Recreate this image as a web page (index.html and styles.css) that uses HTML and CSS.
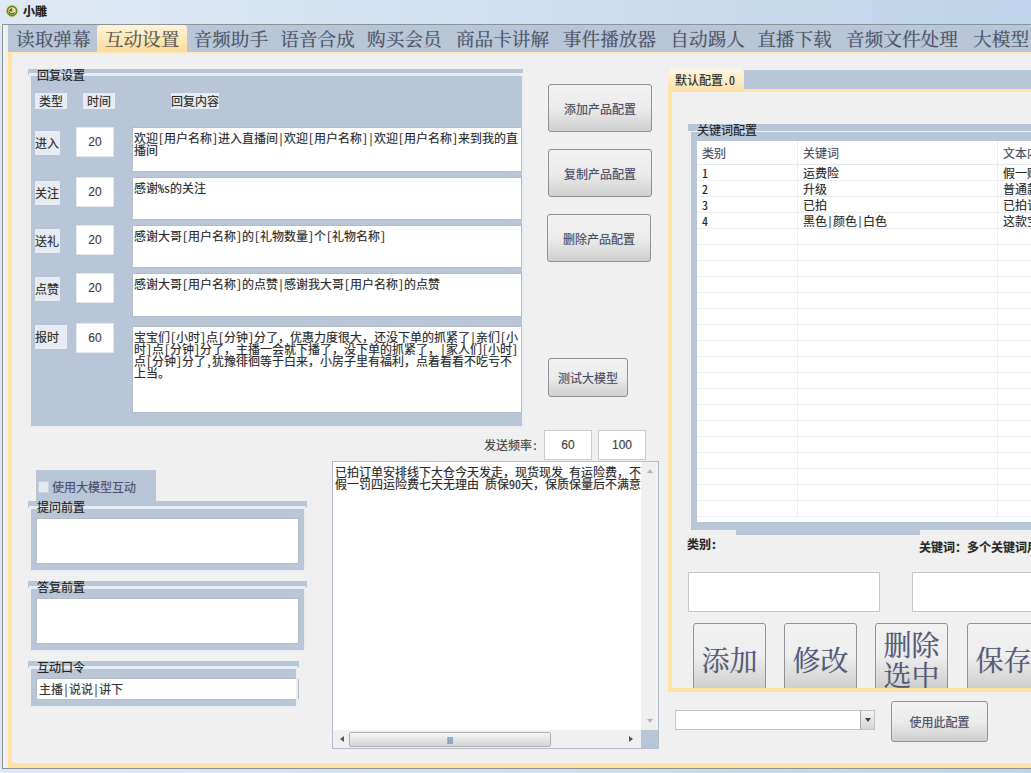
FILE: index.html
```html
<!DOCTYPE html>
<html lang="zh">
<head>
<meta charset="utf-8">
<title>小雕</title>
<link rel="stylesheet" href="styles.css">
</head>
<body>
<header class="titlebar">
  <svg class="app-icon" width="14" height="14" viewBox="0 0 14 14"><circle cx="7" cy="7" r="6.5" fill="#f3d6a4"/><circle cx="7" cy="7" r="4.6" fill="none" stroke="#4d8f2e" stroke-width="1.6"/><path d="M4 7.5a3 3 0 0 0 5.5 1M7 4.5l-2 2 2.4.6" fill="none" stroke="#2f6f1c" stroke-width="1.2"/></svg>
  <span class="app-name">小雕</span>
</header>
<main class="window">
  <nav class="tabs">
    <span class="tab">读取弹幕</span><span class="tab active">互动设置</span><span class="tab">音频助手</span><span class="tab">语音合成</span><span class="tab">购买会员</span><span class="tab">商品卡讲解</span><span class="tab">事件播放器</span><span class="tab">自动踢人</span><span class="tab">直播下载</span><span class="tab">音频文件处理</span><span class="tab">大模型</span>
  </nav>
  <section class="panel">
    <div class="left-stack">
      <div class="top-row">
        <div class="group reply-group">
          <div class="legend"><span>回复设置</span></div>
          <div class="group-body reply-body">
            <div class="reply-head">
              <span class="lbl">类型</span><span class="lbl head-time">时间</span><span class="lbl head-content">回复内容</span>
            </div>
            <div class="reply-row row-a"><span class="lbl tag">进入</span><div class="num">20</div><div class="field">欢迎[用户名称]进入直播间|欢迎[用户名称]|欢迎[用户名称]来到我的直播间</div></div>
            <div class="reply-row row-b"><span class="lbl tag">关注</span><div class="num">20</div><div class="field">感谢%s的关注</div></div>
            <div class="reply-row row-b"><span class="lbl tag">送礼</span><div class="num">20</div><div class="field">感谢大哥[用户名称]的[礼物数量]个[礼物名称]</div></div>
            <div class="reply-row row-c"><span class="lbl tag">点赞</span><div class="num">20</div><div class="field">感谢大哥[用户名称]的点赞|感谢我大哥[用户名称]的点赞</div></div>
            <div class="reply-row row-d"><span class="lbl tag wide">报时</span><div class="num">60</div><div class="field">宝宝们[小时]点[分钟]分了，优惠力度很大，还没下单的抓紧了|亲们[小时]点[分钟]分了，主播一会就下播了，没下单的抓紧了，|家人们[小时]点[分钟]分了,犹豫徘徊等于白来，小房子里有福利，点着看看不吃亏不上当。</div></div>
          </div>
        </div>
        <div class="action-col">
          <button class="btn action">添加产品配置</button>
          <button class="btn action">复制产品配置</button>
          <button class="btn action shift">删除产品配置</button>
          <button class="btn test">测试大模型</button>
        </div>
      </div>
      <div class="freq-row">
        <span class="freq-label">发送频率:</span><div class="num freq">60</div><div class="num freq">100</div>
      </div>
      <div class="bottom-row">
        <div class="llm-col">
          <div class="check-tab"><span class="check"></span><span>使用大模型互动</span></div>
          <div class="group small-group">
            <div class="legend"><span>提问前置</span></div>
            <div class="group-body"><div class="field tall"></div></div>
          </div>
          <div class="group small-group">
            <div class="legend"><span>答复前置</span></div>
            <div class="group-body"><div class="field tall"></div></div>
          </div>
          <div class="group cmd-group">
            <div class="legend"><span>互动口令</span></div>
            <div class="group-body"><div class="field cmd">主播|说说|讲下</div></div>
          </div>
        </div>
        <div class="memo">
          <div class="memo-main">
            <div class="memo-text">已拍订单安排线下大仓今天发走，现货现发 有运险费，不假一罚四运险费七天无理由 质保90天，保质保量后不满意</div>
            <div class="vscroll"><i class="arrow up"></i><i class="arrow down"></i></div>
          </div>
          <div class="hscroll">
            <i class="arrow left"></i>
            <div class="thumb">|||</div>
            <i class="arrow right"></i>
            <div class="corner"></div>
          </div>
        </div>
      </div>
    </div>
    <div class="right-stack">
      <div class="config-tabs"><span class="config-tab">默认配置.0</span></div>
      <div class="config-panel">
        <div class="group kw-group">
          <div class="legend"><span>关键词配置</span></div>
          <div class="group-body kw-body">
            <div class="grid">
              <div class="grid-head"><span>类别</span><span>关键词</span><span>文本内容</span></div>
              <div class="grid-row"><span>1</span><span>运费险</span><span>假一赔四运险费七天</span></div>
              <div class="grid-row"><span>2</span><span>升级</span><span>普通款升级</span></div>
              <div class="grid-row"><span>3</span><span>已拍</span><span>已拍订单安排</span></div>
              <div class="grid-row"><span>4</span><span>黑色|颜色|白色</span><span>这款宝贝</span></div>
              <div class="grid-row"><span></span><span></span><span></span></div>
              <div class="grid-row"><span></span><span></span><span></span></div>
              <div class="grid-row"><span></span><span></span><span></span></div>
              <div class="grid-row"><span></span><span></span><span></span></div>
              <div class="grid-row"><span></span><span></span><span></span></div>
              <div class="grid-row"><span></span><span></span><span></span></div>
              <div class="grid-row"><span></span><span></span><span></span></div>
              <div class="grid-row"><span></span><span></span><span></span></div>
              <div class="grid-row"><span></span><span></span><span></span></div>
              <div class="grid-row"><span></span><span></span><span></span></div>
              <div class="grid-row"><span></span><span></span><span></span></div>
              <div class="grid-row"><span></span><span></span><span></span></div>
              <div class="grid-row"><span></span><span></span><span></span></div>
              <div class="grid-row"><span></span><span></span><span></span></div>
              <div class="grid-row"><span></span><span></span><span></span></div>
              <div class="grid-row"><span></span><span></span><span></span></div>
              <div class="grid-row"><span></span><span></span><span></span></div>
              <div class="grid-row"><span></span><span></span><span></span></div>
            </div>
          </div>
          <div class="kw-foot"></div>
        </div>
        <div class="kw-labels"><span class="kw-cat">类别:</span><span class="kw-word">关键词：多个关键词用|隔开</span></div>
        <div class="kw-inputs"><div class="field kw-input"></div><div class="field kw-input second"></div></div>
        <div class="kw-buttons">
          <button class="btn big">添加</button><button class="btn big">修改</button><button class="btn big">删除选中</button><button class="btn big last">保存</button>
        </div>
      </div>
      <div class="use-row">
        <div class="combo"><span class="combo-drop"><i class="arrow down dark"></i></span></div>
        <button class="btn use">使用此配置</button>
      </div>
    </div>
  </section>
</main>
</body>
</html>
```
FILE: styles.css
```css
* { box-sizing: border-box; }
html, body { margin: 0; padding: 0; }
body {
  width: 1031px;
  height: 773px;
  overflow: hidden;
  background: linear-gradient(90deg, #dfe9f3 0%, #cfe0f0 50%, #bdd4ea 100%);
  font-family: "Noto Sans Mono CJK SC", "Noto Sans CJK SC", "Liberation Sans", sans-serif;
  font-size: 12px;
  line-height: 12px;
  color: #2a2a2a;
  text-shadow: 0 0 1px rgba(30, 30, 40, .3);
}
.titlebar {
  height: 24px;
  display: flex;
  align-items: center;
  padding: 0 0 2px 5px;
  gap: 4px;
}
.app-name { font-weight: 700; font-size: 12px; color: #222; }
.window {
  width: 1100px;
  height: 745px;
  margin-left: 2px;
  border: 1px solid #8d9299;
  background: #f0f0f0;
  display: flex;
  flex-direction: column;
}
.tabs {
  height: 27px;
  flex: none;
  display: flex;
  margin-left: 5px;
  padding-left: 2px;
  background: #b8c6d8;
}
.tab {
  font-family: "Noto Serif CJK SC", "Noto Sans CJK SC", serif;
  font-size: 18.67px;
  line-height: 27px;
  padding: 0 6.1px;
  color: #4d5468;
  white-space: nowrap;
}
.tab:first-child { padding-left: 6px; }
.tab.active {
  padding: 0 8px;
  border-radius: 3px 3px 0 0;
  background: linear-gradient(#fdf3da, #fddc9c);
  color: #5a5a50;
}
.tab:nth-child(5) { margin-right: 2px; }
.tab:nth-child(6) { margin-right: 1.5px; }
.tab:nth-child(7) { margin-right: 2px; }
.tab:nth-child(9) { margin-right: 2px; }
.tab:nth-child(10) { margin-right: 3px; }
.panel {
  flex: 1;
  display: flex;
  margin-left: 5px;
  border-left: 4px solid #ffe3a3;
  border-top: 2px solid #ffe9b9;
  border-bottom: 5px solid #ffe3a3;
  padding: 14px 0 0 16px;
  min-height: 0;
}
.left-stack { width: 632px; flex: none; }
.top-row { display: flex; height: 360px; }

.group { flex: none; }
.legend {
  height: 7px;
  background: #b8c6d8;
  padding-left: 9px;
  overflow: visible;
  white-space: nowrap;
}
.legend span { display: inline-block; position: relative; top: -1px; color: #222; line-height: 14px; }
.group-body {
  margin: 0 3px;
  background: #b8c6d8;
  border-top: 1px solid #e6edf5;
  outline: 2px solid #e9eef5;
}

.reply-group { width: 495px; height: 358px; padding-top: 1px; }
.reply-group .legend { height: 6px; }
.reply-body { height: 351px; padding: 17px 0 0 4px; width: 491px; margin-right: 0; }
.reply-head { display: flex; height: 16px; align-items: stretch; margin-bottom: 18px; }
.lbl { background: #e8ecf2; color: #2c2c2c; display: flex; align-items: center; white-space: nowrap; }
.head-time { margin-left: 16px; width: 32px; justify-content: center; }
.head-content { margin-left: 56px; }
.reply-head .lbl:first-child { width: 32px; justify-content: center; }
.reply-row { display: flex; align-items: flex-start; }
.tag { width: 25px; height: 24px; margin-top: 4px; flex: none; }
.tag.wide { width: 32px; margin-top: 2px; }
.num {
  width: 38px;
  height: 30px;
  margin-left: 16px;
  flex: none;
  background: #fff;
  border: 1px solid #e2e6ec;
  display: flex;
  align-items: center;
  justify-content: center;
  color: #444;
  font-family: "Liberation Sans", sans-serif;
}
.tag.wide + .num { margin-left: 9px; }
.field { background: #fff; border: 1px solid #b4bcc8; padding: 4px 0 0 1px; color: #2a2a2a; }
.reply-row .field { width: 390px; margin-left: 18px; word-break: break-all; flex: none; }
.row-a { height: 50px; } .row-a .field { height: 45px; }
.row-b { height: 48px; } .row-b .field { height: 43px; }
.row-c { height: 50px; } .row-c .field { height: 44px; }
.row-d .field { height: 87px; margin-top: 3px; }

.action-col { display: flex; flex-direction: column; align-items: flex-start; padding: 16px 0 0 25px; }
.btn {
  font-family: inherit;
  font-size: 12px;
  color: #4a4e66;
  border: 1px solid #8f9296;
  border-radius: 3px;
  background: linear-gradient(#f2f2f2 0%, #ececec 50%, #cfcfcf 100%);
  padding: 0;
  flex: none;
  text-shadow: inherit;
}
.action { width: 104px; height: 48px; margin-bottom: 17px; }
.action.shift { margin-left: -1px; margin-bottom: 96px; }
.test { width: 80px; height: 39px; }

.freq-row { display: flex; align-items: center; justify-content: flex-end; height: 30px; padding-right: 14px; gap: 6px; margin-top: 2px; }
.freq-label { color: #444; }
.num.freq { width: 48px; height: 30px; margin: 0; border-color: #c9cdd2; font-size: 12px; }
.bottom-row { display: flex; margin-top: 1px; }
.llm-col { width: 304px; flex: none; padding-top: 9px; }
.check-tab {
  width: 120px;
  height: 32px;
  margin-left: 8px;
  background: #b8c6d8;
  color: #4d5278;
  display: flex;
  align-items: center;
  gap: 3px;
  padding: 2px 0 0 2px;
}
.check { width: 11px; height: 12px; background: #e4e9f0; border: 1px solid #c9d2de; }
.small-group { width: 279px; height: 69px; margin-bottom: 11px; margin-top: -1px; }
.small-group + .small-group { margin-top: 0; }
.small-group .group-body { height: 62px; padding: 9px 5px 0; width: 273px; }
.field.tall { height: 46px; }
.cmd-group { width: 271px; }
.cmd-group .group-body { height: 38px; padding: 9px 0 0 5px; }
.field.cmd { width: 263px; height: 22px; padding: 4px 2px; color: #333; border-radius: 2px; }

.memo {
  width: 327px;
  height: 288px;
  border: 1px solid #b5bdc9;
  background: #fff;
  display: flex;
  flex-direction: column;
}
.memo-main { flex: 1; display: flex; min-height: 0; }
.memo-text { flex: 1; padding: 4px 0 0 2px; word-break: break-all; }
.vscroll { width: 17px; flex: none; background: #f0f0f0; display: flex; flex-direction: column; justify-content: space-between; align-items: center; padding: 7px 0; }
.hscroll { height: 18px; flex: none; display: flex; align-items: center; background: #f0f0f0; padding-left: 7px; }
.thumb {
  width: 202px;
  height: 15px;
  margin: 0 0 0 5px;
  border: 1px solid #b0b0b0;
  border-radius: 2px;
  background: linear-gradient(#f6f6f6, #d4d4d4);
  font-size: 8px;
  line-height: 13px;
  text-align: center;
  color: #555;
  font-family: "Liberation Sans", sans-serif;
}
.corner { width: 17px; height: 18px; background: #b8c6d8; }
.arrow { display: block; width: 0; height: 0; border: 3px solid transparent; flex: none; }
.arrow.up { border-bottom: 4px solid #b5b5b5; border-top-width: 0; }
.arrow.down { border-top: 4px solid #b5b5b5; border-bottom-width: 0; }
.arrow.left { border-right: 4px solid #555; border-left-width: 0; }
.arrow.right { border-left: 4px solid #555; border-right-width: 0; margin-left: 78px; margin-right: 8px; }
.arrow.dark { border-top-color: #444; }

.right-stack { width: 420px; flex: none; margin-left: 8px; padding-top: 1px; }
.config-tabs { height: 23px; background: linear-gradient(#f0f0f0 1px, #b8c6d8 1px); display: flex; }
.config-tab {
  width: 76px;
  height: 21px;
  padding: 5px 0 0 7px;
  background: linear-gradient(#fdf6e3, #fde3ad);
  border-radius: 3px 3px 0 0;
  white-space: nowrap;
}
.config-panel {
  height: 603px;
  border-left: 4px solid #ffe3a3;
  border-top: 3px solid #ffe3a3;
  border-bottom: 4px solid #ffe3a3;
  margin-top: -3px;
  padding: 32px 0 0 16px;
  overflow: hidden;
}
.kw-group { width: 420px; }
.kw-body { padding: 9px 0 8px 6px; margin-right: 0; height: 399px; outline: none; }
.grid { width: 400px; background: #fff; height: 381px; overflow: hidden; }
.grid-head, .grid-row { display: grid; grid-template-columns: 101px 200px 1fr; }
.grid-head { height: 24px; line-height: 24px; color: #4a4e66; border-bottom: 1px solid #e6e8ee; }
.grid-row { height: 16px; line-height: 16px; border-bottom: 1px solid #eceef2; color: #2c2c2c; white-space: nowrap; }
.grid-head span, .grid-row span { padding-left: 5px; border-right: 1px solid #eceef2; overflow: hidden; }
.kw-foot { height: 5px; width: 184px; margin-left: 48px; background: #b8c6d8; }
.kw-labels { height: 26px; display: flex; margin-left: -1px; font-weight: 700; }
.kw-cat { width: 232px; margin-top: 3px; }
.kw-word { margin-top: 6px; white-space: nowrap; }
.kw-inputs { display: flex; margin-top: 11px; }
.field.kw-input { width: 192px; height: 40px; flex: none; border-color: #c4c8ce; }
.field.kw-input.second { width: 200px; margin-left: 32px; }
.kw-buttons { display: flex; margin: 11px 0 0 5px; gap: 18px; }
.btn.big {
  width: 73px;
  height: 72px;
  font-family: "Noto Serif CJK SC", "Noto Sans CJK SC", serif;
  font-size: 28px;
  line-height: 30px;
  color: #55597a;
  background: linear-gradient(#f2f2f2 0%, #eeeeee 45%, #cacaca 100%);
  padding: 0 4px;
}
.btn.big.last { margin-left: 1px; }
.use-row { display: flex; align-items: flex-start; padding: 9px 0 0 7px; }
.combo {
  width: 200px;
  height: 20px;
  margin-top: 9px;
  background: #fff;
  border: 1px solid #c0c4ca;
  display: flex;
  justify-content: flex-end;
}
.combo-drop { width: 14px; background: linear-gradient(#f4f4f4, #d6d6d6); border-left: 1px solid #aaa; display: flex; align-items: center; justify-content: center; }
.use { width: 97px; height: 41px; margin-left: 16px; }
```
